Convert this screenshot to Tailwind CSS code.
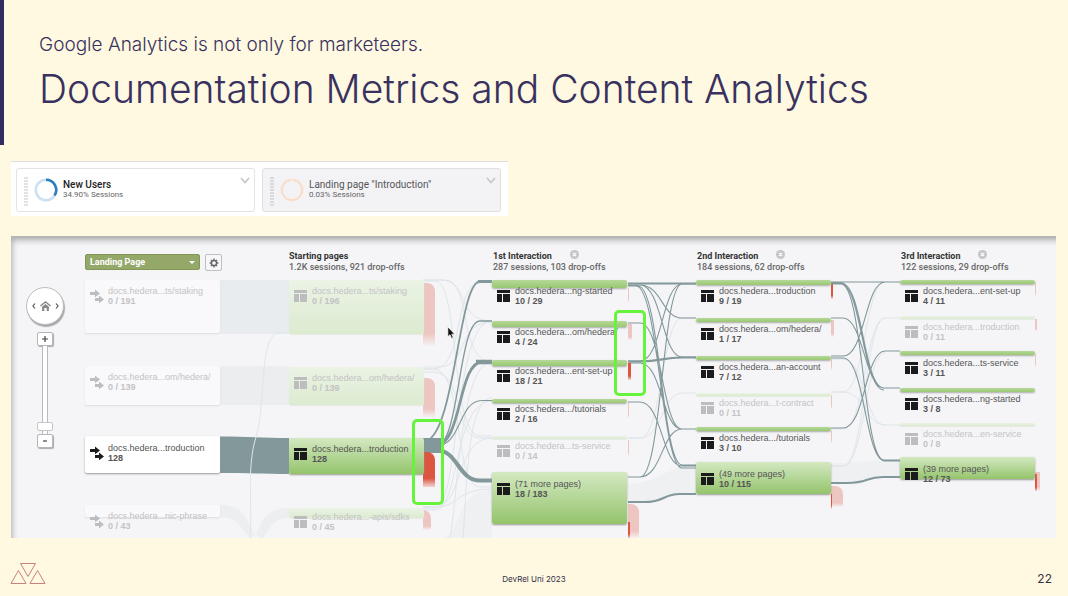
<!DOCTYPE html>
<html lang="en">
<head>
<meta charset="utf-8">
<title>Documentation Metrics and Content Analytics</title>
<script src="https://cdn.jsdelivr.net/npm/@tailwindcss/browser@4"></script>
</head>
<body class="bg-[#fff9e1] font-['Inter',sans-serif]">
<div class="flex min-h-screen flex-col">
  <header class="h-[145px] border-l-4 border-[#312c5f] pt-[33px] pl-[35px] text-[#39315f]">
    <p class="text-[19px] leading-6 font-light">Google Analytics is not only for marketeers.</p>
    <h1 class="mt-[10px] text-[39px] leading-[44px] font-light">Documentation Metrics and Content Analytics</h1>
  </header>

  <section class="mt-4 ml-[11px] flex w-[497px] gap-[7px] border-t border-[#dfdfdf] bg-white pt-[6px] pr-[7px] pb-1 pl-[5px] font-['Roboto',sans-serif]" aria-label="Segments">
    <article class="flex h-11 flex-1 items-start rounded-[3px] border border-[#e3e3e5] bg-white px-[7px] pt-2">
      <span class="h-[29px] w-1 bg-[repeating-linear-gradient(#e2e2e4_0_2px,transparent_2px_3px)]"></span>
      <svg class="mt-[1px] ml-[6px] h-6 w-6" viewBox="0 0 24 24" fill="none" stroke-width="2.6"><circle cx="12" cy="12" r="10.2" stroke="#cde1f2"/><path d="M12 1.8A10.2 10.2 0 0 1 20.6 17.5" stroke="#2e80bb"/></svg>
      <div class="ml-[5px] flex-1"><h2 class="mt-[2px] text-[10px] leading-[11px] font-medium text-[#222]">New Users</h2><p class="text-[8px] leading-[10px] text-[#666]">34.90% Sessions</p></div>
      <button aria-label="New Users options" class="-mr-[3px]"><svg class="h-2 w-[10px]" viewBox="0 0 10 8" fill="none" stroke="#c6c6c8" stroke-width="1.7"><path d="m1 1 4 4.5L9 1"/></svg></button>
    </article>
    <article class="flex h-11 flex-1 items-start rounded-[3px] border border-[#dfdfe2] bg-[#f3f3f6] px-[7px] pt-2">
      <span class="h-[29px] w-1 bg-[repeating-linear-gradient(#dadadc_0_2px,transparent_2px_3px)]"></span>
      <svg class="mt-[1px] ml-[6px] h-6 w-6" viewBox="0 0 24 24" fill="none" stroke-width="2.2"><path d="M12.6 1.8A10.2 10.2 0 1 1 11.4 1.800" stroke="#fbdcc7"/></svg>
      <div class="ml-[5px] flex-1"><h2 class="mt-[2px] text-[10px] leading-[11px] text-[#555]">Landing page "Introduction"</h2><p class="text-[8px] leading-[10px] text-[#666]">0.03% Sessions</p></div>
      <button aria-label="Landing page options" class="-mr-[3px]"><svg class="h-2 w-[10px]" viewBox="0 0 10 8" fill="none" stroke="#c6c6c8" stroke-width="1.7"><path d="m1 1 4 4.5L9 1"/></svg></button>
    </article>
  </section>

  <main class="relative mt-5 mr-3 ml-[11px] h-[302px] overflow-hidden border-t-2 border-[#b7b6b5] bg-[#f5f5f8] font-['Roboto',sans-serif] shadow-[inset_4px_5px_6px_-3px_#aaa8aa]">
    <!-- Traffic between pages -->
    <svg class="absolute -top-[2px] left-0 h-[302px] w-[1045px]" viewBox="11 236 1045 302" fill="none" aria-hidden="true">
      <g stroke="none">
        <path fill="#e8ecef" d="M220 280h69v54h-69z"/>
        <path fill="#ebedef" d="M220 366h69v39h-69z"/>
        <path fill="#82989a" d="M220 436.5c25 0 45 1.5 69 1.5v36c-24 0-45-1-69-1z"/>
        <path fill="#eceef0" d="M220 505c35 0 25 33 45 33h-10c-13 0-12-21-35-21zM289 508c-35 0-25 30-42 30h12c12 0 7-20 30-20z"/>
        <path fill="#ebeef0" d="M628 484c30 0 40-19 68-19v29c-30 0-38 8-68 8zM831 463c30 0 38-3 69-3v17c-30 0-38 6-69 6zM492 490c-38 0-30 48-52 48h52z" opacity=".75"/>
        <path fill="#82989a" d="M423 438h20v15h-20z"/>
      </g>
      <g stroke="#dfe5e8" stroke-width="1">
        <path d="M289 333h-10C259 333 266 405 256 437S253 510 250 538"/>
        <path d="M423 280H440C470 280 455 320 492 321M423 280h22C472 280 458 362 492 362M423 281h12C460 281 450 436 480 436h12M423 367h15c32 0 17-45 54-45M423 369h10c32 0 20-86 47-86M423 372h10c32 0 20 66 47 66h12M423 369h10c32 0 20 118 47 118h12M423 507h12c28 0 20-69 57-69M423 507h12c25 0 20-18 57-18M423 508h12c25 0 18-187 57-187M423 510h12c25 0 18-109 57-109M450 538c8-40 10-176 42-176M463 538c4-50 4-140 29-140"/>
        <path d="M628 438h12c22 0 22-120 42-120h14M628 438h12c22 0 22-45 42-45h14M831 392h12c22 0 22-110 42-110M831 392h12c22 0 22 33 42 33h15M831 466h12c22 0 22-148 42-148h15M831 466h12c22 0 22-113 42-113M831 429h12c22 0 22-111 42-111M831 359h12c22 0 22 66 42 66"/>
      </g>
      <g stroke="#82989a" stroke-width="1.1">
        <path stroke-width="1.8" d="M423 442C455 442 458 281.500 480 281.500"/>
        <path stroke-width="3" d="M478 281.500h14"/>
        <path stroke-width="1.3" d="M428 446h8C460 446 458 321 480 321h12"/>
        <path stroke-width="2.800" d="M428 445h8C462 445 458 362 482 362"/>
        <path stroke-width="4.500" d="M476 362h16"/>
        <path d="M436 446C462 446 458 400.500 482 400.500h10"/>
        <path stroke-width="4" d="M428 450h8C458 450 458 480.500 480 480.500h12"/>
        <path stroke-width="2.200" d="M628 283.500h68"/>
        <path d="M628 285h12c22 0 22 33 42 33h14M628 285h12c22 0 22 72 42 72h14M628 286h10c22 0 24 179 44 179h14M628 286h8c22 0 26 182 46 182h14M628 323h12c22 0 22 106 42 106h14M628 361h12c22 0 22-77 42-77h14M628 363h12c22 0 22 66 42 66h14M628 402h12c22 0 22 64 42 64h14M628 477h12c22 0 22-193 42-193h14M628 477h12c22 0 22-48 42-48h14"/>
        <path stroke-width="2.200" d="M628 361.500h12c22 0 22-4 42-4h14M628 502h16c22 0 18-8 36-8h16"/>
        <path d="M831 282h69M831 283h10c22 0 22 105 43 105h16M831 284h10c20 0 22 106 43 106M831 284h10c22 0 22 176 43 176h16M831 318h12c20 0 22 70 41 70M831 356h12c22 0 22-74 42-74h15M831 358h12c22 0 22 103 42 103h15M831 428h12c22 0 22-77 42-77h15"/>
        <path stroke-width="2.200" d="M831 483h16c22 0 18-6 36-6h17"/>
      </g>
    </svg>

    <div class="relative flex pt-3 pl-[74px]">
      <div class="flex w-[204px] shrink-0 items-start gap-[5px] pt-1">
        <div class="relative">
          <select aria-label="Dimension" class="block h-4 w-[115px] appearance-none rounded-[2px] border border-[#829655] bg-[#94a869] pl-1 text-[9px] leading-[13px] font-bold text-white"><option>Landing Page</option></select>
          <svg class="pointer-events-none absolute top-[7px] right-[5px] h-[3px] w-[6px]" viewBox="0 0 6 3" fill="#fff"><path d="M0 0h6L3 3z"/></svg>
        </div>
        <button aria-label="Settings" class="flex h-[17px] w-[17px] items-center justify-center rounded-[2px] border border-[#bfbfc1] bg-[#f7f7f9]"><svg class="h-[10px] w-[10px]" viewBox="0 0 10 10" fill="none" stroke="#666"><circle cx="5" cy="5" r="2.600" stroke-width="1.500"/><path stroke-width="1.400" d="M5 .6v1.300M5 8.100v1.300M.6 5h1.300M8.100 5h1.300M1.900 1.900l.9.9M7.200 7.200l.9.9M1.900 8.100l.9-.9M7.200 2.800l.9-.9"/></svg></button>
      </div>
      <div class="w-[204px] shrink-0"><h3 class="text-[9px] leading-[12px] font-bold text-[#333]">Starting pages</h3><p class="text-[9px] leading-[11px] font-medium text-[#666]">1.2K sessions, 921 drop-offs</p></div>
      <div class="w-[204px] shrink-0"><div class="flex h-3 w-[86px] items-start justify-between"><h3 class="text-[9px] leading-[12px] font-bold whitespace-nowrap text-[#333]">1st Interaction</h3><button aria-label="Remove 1st interaction"><svg class="h-[9px] w-[9px]" viewBox="0 0 9 9"><circle cx="4.500" cy="4.500" r="4.500" fill="#c5c5c7"/><path d="m2.800 2.800 3.400 3.400m0-3.400L2.800 6.200" stroke="#fff" stroke-width="1.200"/></svg></button></div><p class="text-[9px] leading-[11px] font-medium text-[#666]">287 sessions, 103 drop-offs</p></div>
      <div class="w-[204px] shrink-0"><div class="flex h-3 w-[88px] items-start justify-between"><h3 class="text-[9px] leading-[12px] font-bold whitespace-nowrap text-[#333]">2nd Interaction</h3><button aria-label="Remove 2nd interaction"><svg class="h-[9px] w-[9px]" viewBox="0 0 9 9"><circle cx="4.500" cy="4.500" r="4.500" fill="#c5c5c7"/><path d="m2.800 2.800 3.400 3.400m0-3.400L2.800 6.200" stroke="#fff" stroke-width="1.200"/></svg></button></div><p class="text-[9px] leading-[11px] font-medium text-[#666]">184 sessions, 62 drop-offs</p></div>
      <div class="w-[150px] shrink-0"><div class="flex h-3 w-[86px] items-start justify-between"><h3 class="text-[9px] leading-[12px] font-bold whitespace-nowrap text-[#333]">3rd Interaction</h3><button aria-label="Remove 3rd interaction"><svg class="h-[9px] w-[9px]" viewBox="0 0 9 9"><circle cx="4.500" cy="4.500" r="4.500" fill="#c5c5c7"/><path d="m2.800 2.800 3.400 3.400m0-3.400L2.800 6.200" stroke="#fff" stroke-width="1.200"/></svg></button></div><p class="text-[9px] leading-[11px] font-medium text-[#666]">122 sessions, 29 drop-offs</p></div>
    </div>

    <div id="flow" class="absolute -top-[2px] left-0 h-[302px] w-[1045px] font-['Liberation_Sans',Arial,sans-serif]"></div>

    <!-- Pan and zoom controls -->
    <div class="absolute top-[49px] left-[15px] flex w-[38px] flex-col items-center">
      <div class="flex h-[38px] w-[38px] items-center justify-center gap-1 rounded-full border border-[#bcbcbe] bg-white shadow-[1px_2px_1px_#a8a8aa]">
        <button aria-label="Pan left"><svg class="h-[6px] w-1" viewBox="0 0 4 6" fill="none" stroke="#555" stroke-width="1.200"><path d="M3 .5 1 3l2 2.500"/></svg></button>
        <button aria-label="Home"><svg class="h-[10px] w-[11px]" viewBox="0 0 11 10"><path d="M.4 5 5.500.9 10.600 5" fill="none" stroke="#888" stroke-width="1.300"/><path d="m5.500 3 3.400 2.800V10H6.700V7H4.300v3H2.100V5.800z" fill="#888"/></svg></button>
        <button aria-label="Pan right"><svg class="h-[6px] w-1" viewBox="0 0 4 6" fill="none" stroke="#555" stroke-width="1.200"><path d="m1 .5 2 2.500-2 2.500"/></svg></button>
      </div>
      <button aria-label="Zoom in" class="mt-[7px] flex h-[14px] w-4 items-center justify-center rounded-[2px] border border-[#b5b5b7] bg-white shadow-[1px_1px_1px_#aaa]"><svg class="h-[6px] w-[6px]" viewBox="0 0 6 6" stroke="#444" stroke-width="1.200"><path d="M3 0v6M0 3h6"/></svg></button>
      <input type="range" aria-label="Zoom level" min="0" max="100" value="4" class="block h-[88px] w-4 appearance-none bg-[linear-gradient(to_right,transparent_5px,#b9b9bb_5px_6px,#fff_6px_10px,#b9b9bb_10px_11px,transparent_11px)] [direction:rtl] [writing-mode:vertical-lr] [&::-webkit-slider-thumb]:h-[9px] [&::-webkit-slider-thumb]:w-4 [&::-webkit-slider-thumb]:appearance-none [&::-webkit-slider-thumb]:rounded-[2px] [&::-webkit-slider-thumb]:border [&::-webkit-slider-thumb]:border-[#c5c5c7] [&::-webkit-slider-thumb]:bg-white">
      <button aria-label="Zoom out" class="flex h-[14px] w-4 items-center justify-center rounded-[2px] border border-[#b5b5b7] bg-white shadow-[1px_1px_1px_#aaa]"><svg class="h-[6px] w-[4px]" viewBox="0 0 4 6" stroke="#444" stroke-width="1.200"><path d="M0 3h4"/></svg></button>
    </div>

    <!-- Highlighted drop-offs -->
    <div class="absolute top-[181px] left-[401px] h-[86px] w-8 rounded-[5px] border-3 border-[#66f33c]"></div>
    <div class="absolute top-[72px] left-[603px] h-[86px] w-8 rounded-[5px] border-3 border-[#66f33c]"></div>
    <svg class="absolute top-[88px] left-[436px] h-[14px] w-[9px]" viewBox="0 0 9 14"><path d="M.8.8v10L3 8.800l1.500 3.600 1.800-.8L4.800 8.200h3z" fill="#111" stroke="#fff" stroke-width=".8"/></svg>
  </main>

  <footer class="mt-auto grid grid-cols-3 items-start px-[10px] pb-[9px] text-[#333047]">
    <svg class="h-[23px] w-9" viewBox="0 0 36 23" fill="none" stroke="#c98378" stroke-width="1"><path d="M10.500 1.500h15L18 14.500zM8.500 8.500 16 21.500H1zM27.500 8.500 35 21.500H20z"/></svg>
    <p class="pt-3 text-center text-[8px] leading-[10px]">DevRel Uni 2023</p>
    <p class="pt-[9px] pr-[6px] text-right text-[12px] leading-4">22</p>
  </footer>
</div>

<script>
// Per node: bar top, bar height, first text line top, title, count, faded
const columns = [
  [74, [[44,53,50,'docs.hedera...ts/staking','0 / 191',1],[130,39,136,'docs.hedera...om/hedera/','0 / 139',1],[200,37,207,'docs.hedera...troduction','128',0],[269,12,275,'docs.hedera...nic-phrase','0 / 43',1]]],
  [278, [[44,54,50,'docs.hedera...ts/staking','0 / 196',1],[131,38,137,'docs.hedera...om/hedera/','0 / 139',1],[202,36,208,'docs.hedera...troduction','128',0],[272,10,276,'docs.hedera...-apis/sdks','0 / 45',1]]],
  [481, [[44,8,50,'docs.hedera...ng-started','10 / 29',0],[85,6,91,'docs.hedera...om/hedera/','4 / 24',0],[124,6,130,'docs.hedera...ent-set-up','18 / 21',0],[163,4,168,'docs.hedera.../tutorials','2 / 16',0],[200,3,205,'docs.hedera...ts-service','0 / 14',1],[236,52,243,'(71 more pages)','18 / 183',0]]],
  [685, [[44,5,50,'docs.hedera...troduction','9 / 19',0],[82,4,88,'docs.hedera...om/hedera/','1 / 17',0],[120,4,126,'docs.hedera...an-account','7 / 12',0],[157,3,162,'docs.hedera...t-contract','0 / 11',1],[191,4,197,'docs.hedera.../tutorials','3 / 10',0],[226,32,233,'(49 more pages)','10 / 115',0]]],
  [889, [[44,4,50,'docs.hedera...ent-set-up','4 / 11',0],[80,3,86,'docs.hedera...troduction','0 / 11',1],[115,4,122,'docs.hedera...ts-service','3 / 11',0],[152,4,158,'docs.hedera...ng-started','3 / 8',0],[187,3,193,'docs.hedera...en-service','0 / 8',1],[221,22,228,'(39 more pages)','12 / 73',0]]]
];
// Drop-offs: left, top, width, height, faded
const drops = [[412,47,12,63,1],[412,142,12,39,1],[412,216,12,35,0],[412,274,8,20,1],
  [617,52,1,14,1],[617,88,4,16,1],[617,127,3,17,0],[617,167,1,15,1],[617,204,1,16,1],[617,268,11,34,1],[617,286,2,16,0],
  [820,48,2,15,0],[820,84,3,17,1],[820,122,1,12,1],[820,159,1,14,1],[820,195,1,12,1],[820,250,12,21,1],[820,258,1,15,0],
  [1024,46,1,14,1],[1024,83,2,12,1],[1024,118,1,13,1],[1024,236,5,19,1],[1024,238,2,17,0]];
const page = '<svg class="h-[12px] w-[13px] shrink-0" viewBox="0 0 13 12" fill="currentColor"><path d="M0 0h13v3H0zM0 4h5v8H0zM6 4h7v8H6z"/></svg>';
const arrows = '<svg class="h-[14px] w-[14px] shrink-0" viewBox="0 0 14 14" fill="currentColor"><path d="M0 3h5V.6L10 4.500 5 8.300V6H0zM5 9h4V6.600l5 3.900-5 3.800V12H5z"/></svg>';
const flow = document.getElementById('flow');
let out = '';
for (const [l, t, w, h, faded] of drops) {
  const tone = faded ? 'bg-linear-to-b from-[#eec6c1] from-80% to-[#f5dfdd]/20' : 'bg-linear-to-b from-[#dc5540] from-75% to-[#dc5540]/20';
  out += `<div class="absolute ${w > 6 ? 'rounded-tr-[8px]' : ''} ${tone}" style="left:${l}px;top:${t}px;width:${w}px;height:${h}px"></div>`;
}
columns.forEach(([left, nodes], c) => {
  for (const [top, height, text, title, count, faded] of nodes) {
    const bar = c === 0
      ? (faded ? 'bg-[#f9f8fb] shadow-[0_1px_2px_#dcdcdf]' : 'bg-white shadow-[0_1px_2px_#999]')
      : (faded ? 'bg-linear-to-b from-[#ebf3e5] to-[#dcebd0] shadow-[0_1px_1px_#e5e9e2]'
               : (height < 12 ? 'bg-linear-to-b from-[#b7d898] to-[#98c872] shadow-[0_1px_2px_#aaa]' : 'bg-linear-to-b from-[#d4e8c1] to-[#94c46b] shadow-[0_1px_2px_#999]'));
    out += `<div class="absolute w-[135px] rounded-[2px] ${bar}" style="left:${left}px;top:${top}px;height:${height}px"></div>
      <div class="absolute flex items-center ${c === 0 ? 'gap-1' : 'gap-[5px]'} ${faded ? 'text-[#bdbdbf]' : 'text-[#1b1b1d]'}" style="left:${left + 5}px;top:${text}px">
        ${c === 0 ? arrows : page}
        <div class="text-[9px] leading-[10px] whitespace-nowrap ${faded ? 'text-[#c3c3c5]' : 'text-[#555]'}"><p>${title}</p><p class="font-bold">${count}</p></div>
      </div>`;
  }
});
flow.innerHTML = out;
</script>
</body>
</html>
